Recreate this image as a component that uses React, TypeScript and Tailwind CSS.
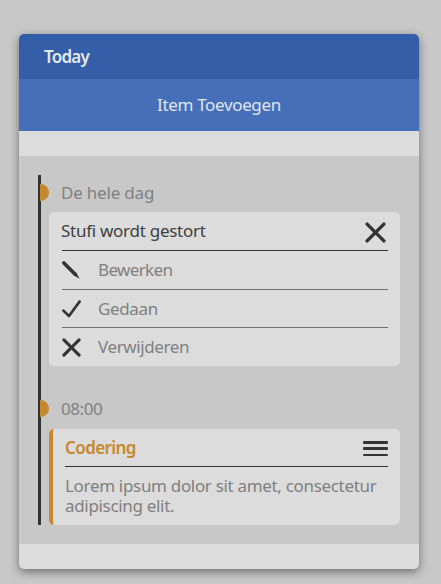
import type { ReactNode } from "react";

function Moment({ label, className = "" }: { label: string; className?: string }) {
  return (
    <div className={`-ml-px flex items-start pt-[9px] text-[#808080] ${className}`}>
      <span className="h-[17px] w-[9px] rounded-r-full bg-[#c6882e]" />
      <span className="ml-3 leading-[17px]">{label}</span>
    </div>
  );
}

function Cross({ className = "" }: { className?: string }) {
  return (
    <svg viewBox="0 0 20 20" className={className} fill="none" stroke="#333" strokeWidth="3.2" strokeLinecap="round">
      <path d="M2 2 18 18M18 2 2 18" />
    </svg>
  );
}

function Pencil() {
  return (
    <svg viewBox="0 0 18 18" className="h-[18px] w-[18px]" fill="#333">
      <path d="M1.9 1.9 12.9 12.9" stroke="#333" strokeWidth="3.6" strokeLinecap="round" />
      <path d="M11.4 14.2 14.2 11.4 17.6 17.8Z" />
    </svg>
  );
}

function Check() {
  return (
    <svg viewBox="0 0 19 18" className="h-[18px] w-[19px]" fill="none" stroke="#333" strokeWidth="2.7" strokeLinecap="round" strokeLinejoin="round">
      <path d="M1.4 10.6 7 16 17.6 1.5" />
    </svg>
  );
}

function Action({ icon, children, className = "" }: { icon: ReactNode; children: ReactNode; className?: string }) {
  return (
    <div className={`flex items-center text-[#808080] ${className}`}>
      <span className="flex w-9 shrink-0">{icon}</span>
      {children}
    </div>
  );
}

export default function App() {
  return (
    <div className="h-[584px] w-[441px] bg-[#c8c8c8] pt-[34px] pl-[19px] font-['Noto_Sans','Open_Sans',sans-serif] text-[17px]">
      <main className="flex h-[535px] w-[400px] flex-col overflow-hidden rounded-[5px] bg-[#dcdcdc] shadow-[0_3px_10px_rgba(0,0,0,0.45)]">
        <header className="flex h-[45px] items-center bg-[#345ea8] pl-[25px] font-semibold text-[#e4e8ef]">
          <span className="tracking-[-0.75px]">Today</span>
        </header>
        <button className="h-[52px] bg-[#4570b9] text-[#e0e5ee]">
          <span className="tracking-[-0.35px]">Item Toevoegen</span>
        </button>
        <section className="mt-[25px] h-[388px] bg-[#c8c8c8] p-[19px]">
          <div className="h-[350px] border-l-[3px] border-[#333]">
            <Moment label="De hele dag" className="h-[37px] tracking-[-0.2px]" />
            <article className="ml-2 h-[154px] w-[351px] rounded-[5px] bg-[#dcdcdc] pr-3 pl-[13px]">
              <div className="flex h-[39px] items-center justify-between border-b border-[#333] text-[#404040]">
                <span className="-ml-px tracking-[-0.27px]">Stufi wordt gestort</span>
                <Cross className="mt-[2px] mr-[2px] h-[21px] w-[21px]" />
              </div>
              <Action icon={<Pencil />} className="h-[39px] border-b border-[#707070] tracking-[-0.65px]">Bewerken</Action>
              <Action icon={<Check />} className="h-[38px] border-b border-[#707070] tracking-[-0.35px]">Gedaan</Action>
              <Action icon={<Cross className="h-[19px] w-[19px]" />} className="h-[38px] tracking-[-0.4px]">Verwijderen</Action>
            </article>
            <Moment label="08:00" className="mt-[25px] h-[38px] tracking-[-0.45px]" />
            <article className="ml-2 h-24 w-[351px] rounded-[5px] border-l-4 border-[#c6882e] bg-[#dcdcdc] pr-3 pl-3">
              <div className="flex h-[38px] items-center justify-between border-b border-[#333]">
                <span className="font-semibold tracking-[-0.6px] text-[#c6882e]">Codering</span>
                <svg viewBox="0 0 25 15" className="mt-[2px] h-[15px] w-[25px]" fill="#333">
                  <rect width="25" height="3" rx="1" />
                  <rect y="6" width="25" height="3" rx="1" />
                  <rect y="13" width="25" height="2" rx="1" />
                </svg>
              </div>
              <p className="pt-[9px] leading-5 tracking-[-0.32px] text-[#808080]">
                Lorem ipsum dolor sit amet, consectetur adipiscing elit.
              </p>
            </article>
          </div>
        </section>
      </main>
    </div>
  );
}
